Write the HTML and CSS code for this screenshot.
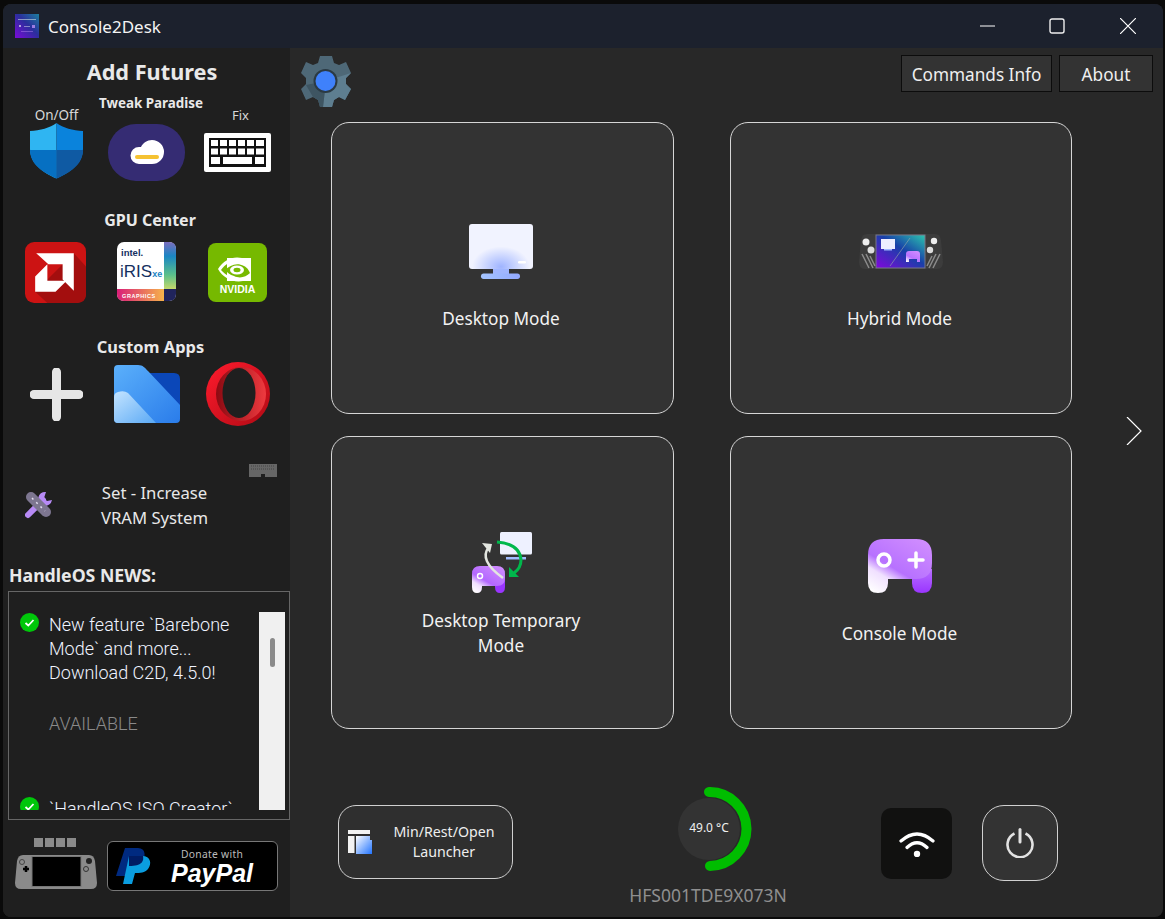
FILE: index.html
```html
<!DOCTYPE html>
<html lang="en">
<head>
<meta charset="utf-8">
<title>Console2Desk</title>
<link rel="stylesheet" href="styles.css">
</head>
<body>
<div class="window">
  <header class="titlebar">
    <svg class="app-icon" viewBox="0 0 24 24"><defs><linearGradient id="ai" x1="0" y1="1" x2="1" y2="0"><stop offset="0" stop-color="#7a0ad8"/><stop offset=".55" stop-color="#2a2f9c"/><stop offset="1" stop-color="#1d7f9e"/></linearGradient></defs><rect width="24" height="24" fill="url(#ai)"/><rect x="3" y="5" width="18" height="1" fill="#cdd" opacity=".6"/><rect x="4" y="11" width="2" height="2" fill="#dde" opacity=".7"/><rect x="9" y="12" width="6" height="1" fill="#dde" opacity=".5"/><rect x="17" y="11" width="3" height="3" fill="#c9f" opacity=".7"/><rect x="6" y="17" width="12" height="1" fill="#c9f" opacity=".4"/></svg>
    <span class="app-name">Console2Desk</span>
    <div class="win-controls">
      <svg class="win-btn" viewBox="0 0 16 16"><path d="M0 8h15" stroke="#fff" stroke-width="1" fill="none"/></svg>
      <svg class="win-btn" viewBox="0 0 16 16"><rect x="1" y="1" width="14" height="14" rx="2" stroke="#eee" stroke-width="1.4" fill="none"/></svg>
      <svg class="win-btn win-close" viewBox="0 0 16 16"><path d="M0 0L16 16M16 0L0 16" stroke="#fff" stroke-width="1.2" fill="none"/></svg>
    </div>
  </header>
  <div class="body-row">
    <aside class="sidebar">
      <h1 class="add-title">Add Futures</h1>
      <h2 class="tweak-title">Tweak Paradise</h2>
      <div class="tweak-row">
        <div class="tweak-col shield-col">
          <span class="mini-label">On/Off</span>
          <svg class="shield" viewBox="0 0 53 56"><path d="M26.5 0C20 5 10 7.500 0 8V26C0 41 14 50 26.500 55.500V0Z" fill="#2fb5f2"/><path d="M26.500 0C33 5 43 7.500 53 8V26C53 41 39 50 26.500 55.500V0Z" fill="#0a83dc"/><path d="M0 27H26.500V55.500C14 50 0 42 0 27Z" fill="#0670c2"/><path d="M53 27H26.500V55.500C39 50 53 42 53 27Z" fill="#0f5aa3"/></svg>
        </div>
        <svg class="cloud" viewBox="0 0 77 57"><rect width="77" height="57" rx="28" fill="#352c73"/><path d="M31 40A8.500 8.500 0 0 1 31 23H33C35 19 39 16 44 16A12 12 0 0 1 44 40Z" fill="#fff"/><rect x="27" y="31" width="24" height="4" rx="2" fill="#f5c232"/></svg>
        <div class="tweak-col fix-col">
          <span class="mini-label">Fix</span>
          <svg class="keyboard" viewBox="0 0 67 39"><rect width="67" height="39" rx="2" fill="#fff"/><rect x="5" y="5" width="57" height="29" fill="#111"/><g fill="#fff"><rect x="7" y="7" width="7" height="6"/><rect x="16" y="7" width="7" height="6"/><rect x="25" y="7" width="7" height="6"/><rect x="34" y="7" width="7" height="6"/><rect x="43" y="7" width="7" height="6"/><rect x="52" y="7" width="8" height="6"/><rect x="7" y="15.500" width="7" height="6"/><rect x="16" y="15.500" width="7" height="6"/><rect x="25" y="15.500" width="7" height="6"/><rect x="34" y="15.500" width="7" height="6"/><rect x="43" y="15.500" width="7" height="6"/><rect x="52" y="15.500" width="8" height="6"/><rect x="7" y="24" width="9" height="7"/><rect x="19" y="24" width="29" height="7"/><rect x="51" y="24" width="9" height="7"/></g></svg>
        </div>
      </div>
      <h2 class="section-title gpu-title">GPU Center</h2>
      <div class="gpu-row">
        <svg class="gpu-amd" viewBox="0 0 60 60"><rect width="60" height="60" rx="9" fill="#cc1313"/><path d="M48 11L60 24V51Q60 60 51 60H22L10 49Z" fill="#a30e0e"/><path d="M11 11H48V48L37 37V22H23Z" fill="#fff"/><path d="M22 22L10 34V49H30L41 38H22Z" fill="#fff"/></svg>
        <svg class="gpu-intel" viewBox="0 0 59 59"><defs><linearGradient id="ib" x1="0" y1="0" x2="0" y2="1"><stop offset="0" stop-color="#7b6dbd"/><stop offset=".3" stop-color="#1a86c4"/><stop offset=".7" stop-color="#5bc08a"/><stop offset="1" stop-color="#c4d86a"/></linearGradient><linearGradient id="ig" x1="0" y1="0" x2="1" y2="0"><stop offset="0" stop-color="#d91e78"/><stop offset="1" stop-color="#f6b34a"/></linearGradient></defs><rect width="59" height="59" rx="7" fill="#fff"/><path d="M47 0H52Q59 0 59 7V47H47Z" fill="url(#ib)"/><path d="M0 47H47V59H7Q0 59 0 52Z" fill="url(#ig)"/><path d="M47 47H59V52Q59 59 52 59H47Z" fill="#20245c"/><text x="4" y="14" class="t-intel">intel.</text><text x="3" y="35" class="t-iris">iRIS<tspan class="t-xe">xe</tspan></text><text x="5" y="56" class="t-graphics">GRAPHICS</text></svg>
        <svg class="gpu-nvidia" viewBox="0 0 59 59"><rect width="59" height="59" rx="8" fill="#76b900"/><path d="M19 15H43V38H19Z" fill="#fff"/><path d="M13 27C18 20 26 16 34 18L34 15C24 13 16 17 10 26C15 35 25 40 35 38V35C26 36 18 33 13 27Z" fill="#fff"/><path d="M17 27C22 22 29 19 36 23C40 25 41 28 42 30C38 34 32 36 26 33C22 32 19 29 17 27Z" fill="#76b900"/><ellipse cx="29" cy="27" rx="7" ry="4.500" fill="#fff"/><ellipse cx="29" cy="27" rx="3.500" ry="2.200" fill="#76b900"/><text x="29.500" y="50" class="t-nvidia">NVIDIA</text></svg>
      </div>
      <h2 class="section-title apps-title">Custom Apps</h2>
      <div class="apps-row">
        <svg class="app-plus" viewBox="0 0 53 53"><path d="M26.500 4V49M4 26.500H49" stroke="#e6e6e6" stroke-width="9" stroke-linecap="round" fill="none"/></svg>
        <svg class="app-folder" viewBox="0 0 66 58"><defs><linearGradient id="fa" x1="0" y1="0" x2="1" y2="1"><stop offset="0" stop-color="#5bb0fb"/><stop offset="1" stop-color="#2a7cea"/></linearGradient><linearGradient id="fb" x1="0" y1="0" x2="1" y2="1"><stop offset="0" stop-color="#c4e4ff"/><stop offset="1" stop-color="#5aa9f5"/></linearGradient></defs><path d="M28 8H60Q66 8 66 14V42Z" fill="#0b47b8"/><path d="M4 0H24C29 0 31 3 34 6L66 40V54Q66 58 62 58H4Q0 58 0 54V4Q0 0 4 0Z" fill="url(#fa)"/><path d="M0 32Q0 28 4 27Q10 25 14 28L42 58H4Q0 58 0 54Z" fill="url(#fb)"/></svg>
        <svg class="app-opera" viewBox="0 0 64 64"><defs><linearGradient id="oa" x1="0" y1="0" x2="1" y2="1"><stop offset="0" stop-color="#ff1b2d"/><stop offset="1" stop-color="#b00a14"/></linearGradient><linearGradient id="ob" x1="0" y1="0" x2="1" y2="0"><stop offset="0" stop-color="#8c0a12"/><stop offset="1" stop-color="#ee3a3f"/></linearGradient></defs><circle cx="32" cy="32" r="32" fill="url(#oa)"/><ellipse cx="35" cy="32" rx="25" ry="27" fill="url(#ob)"/><ellipse cx="33" cy="31" rx="16.500" ry="25" fill="#1f1f1f"/></svg>
      </div>
      <svg class="ram-icon" viewBox="0 0 28 13"><path d="M0 0H28V13H16V10H12V13H0Z" fill="#666"/><path d="M2 2H26M2 5H26" stroke="#444" stroke-width="1" stroke-dasharray="1 1"/></svg>
      <div class="vram-row">
        <svg class="wrench" viewBox="0 0 28 28"><path d="M3 24L18 9" stroke="#b78af5" stroke-width="6" stroke-linecap="round"/><path d="M21 1A7 7 0 1 0 27 9L22 10L19 7Z" fill="#b78af5"/><path d="M6 6L21 21" stroke="#7d7690" stroke-width="10" stroke-linecap="round"/><path d="M7 7L20 20" stroke="#e5e0f2" stroke-width="1.500" stroke-dasharray="2 4"/></svg>
        <span class="vram-label">Set - Increase<br>VRAM System</span>
      </div>
      <h2 class="news-title">HandleOS NEWS:</h2>
      <div class="news-box">
        <div class="news-view">
          <div class="news-list">
            <div class="news-item">
              <svg class="check" viewBox="0 0 19 19"><circle cx="9.500" cy="9.500" r="9.500" fill="#00c70a"/><path d="M5.500 10L8.300 12.500L13.500 7" stroke="#fff" stroke-width="1.800" fill="none"/></svg>
              <div class="news-text">New feature `Barebone Mode` and more...<br>Download C2D, 4.5.0!<span class="news-status">AVAILABLE</span></div>
            </div>
            <div class="news-item">
              <svg class="check" viewBox="0 0 19 19"><circle cx="9.500" cy="9.500" r="9.500" fill="#00c70a"/><path d="M5.500 10L8.300 12.500L13.500 7" stroke="#fff" stroke-width="1.800" fill="none"/></svg>
              <div class="news-text">`HandleOS ISO Creator`</div>
            </div>
          </div>
          <div class="scrollbar"><div class="thumb"></div></div>
        </div>
      </div>
      <div class="foot-row">
        <div class="handheld">
          <div class="dots"><i></i><i></i><i></i><i></i></div>
          <svg class="handheld-svg" viewBox="0 0 82 34"><path d="M8 0H74Q79 0 80 6L82 28Q82 34 76 34H6Q0 34 0 28L2 6Q3 0 8 0Z" fill="#8a8a8a"/><rect x="17" y="1.500" width="49" height="30" fill="#000" stroke="#777"/><path d="M8 14H14M11 11V17" stroke="#000" stroke-width="2.500"/><circle cx="7" cy="7" r="2.500" fill="none" stroke="#444"/><circle cx="74" cy="6" r="3" fill="#222"/><circle cx="71" cy="14" r="2.500" fill="none" stroke="#333"/></svg>
        </div>
        <div class="paypal">
          <svg class="pp-mark" viewBox="0 0 36 36"><path d="M9 0H22C30 0 30 9 26 14C23 18 18 18 13 18L10 28H0Z" fill="#002a80"/><path d="M13 8H26C35 8 36 16 32 21C29 25 24 25 19 25L16 36H7Z" fill="#0a9de0"/><path d="M13 8H27C28 13 26 18 13 18Z" fill="#001c64"/></svg>
          <div class="pp-text"><span class="pp-donate">Donate with</span><span class="pp-name">PayPal</span></div>
        </div>
      </div>
    </aside>
    <main class="main">
      <div class="top-row">
        <svg class="gear" viewBox="0 0 50 52"><path d="M19 1H31L33 8L38 10L45 7L50 18L45 23V29L50 34L44 45L38 42L33 45L31 52H19L17 45L12 42L5 45L0 34L5 29V23L0 18L5 7L12 10L17 8Z" fill="#4e6877"/><path d="M25 26L50 18L45 23V29L50 34L44 45L38 42L33 45L31 52H22Z" fill="#5e7e90"/><path d="M25 26L22 52H19L17 45L12 42L5 30Z" fill="#3e5562"/><circle cx="24.500" cy="26" r="12" fill="#2b3a44"/><circle cx="24.500" cy="26" r="10" fill="#3f81fb"/></svg>
        <div class="top-btns">
          <button class="top-btn cmd">Commands Info</button>
          <button class="top-btn about">About</button>
        </div>
      </div>
      <div class="mid-row">
        <div class="cards">
          <div class="card">
            <svg class="ico-desktop" viewBox="0 0 64 56"><defs><radialGradient id="dg" cx=".5" cy=".95" r=".45"><stop offset="0" stop-color="#9fb4ff"/><stop offset="1" stop-color="#f1f3ff"/></radialGradient><linearGradient id="ds" x1="0" y1="0" x2="1" y2="0"><stop offset="0" stop-color="#a4c4ff"/><stop offset="1" stop-color="#93a9ff"/></linearGradient></defs><rect x="0" y="0" width="64" height="45" rx="3" fill="url(#dg)"/><rect x="24" y="45" width="16" height="5" fill="#a0b6ff"/><rect x="12" y="49.500" width="39" height="5.500" rx="2.700" fill="url(#ds)"/><rect x="49" y="37" width="8" height="2.500" rx="1.200" fill="#fff"/></svg>
            <span class="card-label">Desktop Mode</span>
          </div>
          <div class="card">
            <svg class="ico-hybrid" viewBox="0 0 84 36"><defs><linearGradient id="hg" x1="0" y1="1" x2="1" y2="0"><stop offset="0" stop-color="#8106dd"/><stop offset=".55" stop-color="#1840a8"/><stop offset="1" stop-color="#2cc6ae"/></linearGradient><linearGradient id="hp" x1=".8" y1="0" x2=".1" y2="1"><stop offset="0" stop-color="#cf8cff"/><stop offset=".6" stop-color="#b771ff"/><stop offset="1" stop-color="#fff"/></linearGradient></defs><path d="M8 0H76Q81 0 82 6L84 28Q84 35 78 35H6Q0 35 0 28L2 6Q3 0 8 0Z" fill="#3c3c3c"/><path d="M3 20L10 34M7 20L14 34M11 22L16 32M81 20L74 34M77 20L70 34M73 22L68 32" stroke="#8a8a8a" stroke-width="1.500"/><rect x="17" y="1" width="49" height="33" fill="url(#hg)" stroke="#778"/><circle cx="7" cy="8" r="3.500" fill="#eee"/><circle cx="12" cy="16" r="3.500" fill="#ddd"/><circle cx="75" cy="7" r="3.200" fill="#eee"/><circle cx="71" cy="16" r="3.200" fill="#ddd"/><rect x="22" y="5" width="14" height="10" fill="#eef"/><rect x="25" y="15" width="8" height="1.500" fill="#a0b6ff"/><path d="M51 4L31 32" stroke="#9aa" stroke-width=".6"/><path d="M47 20Q47 17 50 17H58Q61 17 61 20V28H58V25H50V28H47Z" fill="url(#hp)"/></svg>
            <span class="card-label">Hybrid Mode</span>
          </div>
          <div class="card">
            <svg class="ico-temp" viewBox="0 0 62 62"><defs><linearGradient id="pa" x1=".8" y1="0" x2=".1" y2="1"><stop offset="0" stop-color="#cf8bff"/><stop offset=".55" stop-color="#b367ff"/><stop offset=".75" stop-color="#f0e0ff"/><stop offset="1" stop-color="#fff"/></linearGradient></defs><rect x="28" y="0" width="32" height="22.500" rx="1.500" fill="#eef1ff"/><rect x="34" y="25" width="20" height="2.500" fill="#a0bcff"/><path d="M23 42H33V55Q33 61 28 61Q23 61 23 55Z" fill="#9a35ff"/><path d="M0 42Q0 34 8 34H25Q33 34 33 42V46Q33 54 25 54H10V55Q10 61 5 61Q0 61 0 55Z" fill="url(#pa)"/><circle cx="8" cy="44" r="2.500" fill="none" stroke="#fff" stroke-width="1.500"/><path d="M17 15Q6 28 31 46" stroke="#e3e6e0" stroke-width="2.500" fill="none"/><path d="M10 11L20 12L18 21Z" fill="#e3e6e0"/><path d="M25 10Q48 12 49 28Q49 36 42 41" stroke="#00b84c" stroke-width="3" fill="none"/><path d="M37 35V45H47Z" fill="#00b84c"/></svg>
            <span class="card-label two">Desktop Temporary<br>Mode</span>
          </div>
          <div class="card">
            <svg class="ico-console" viewBox="0 0 64 54"><defs><linearGradient id="ca" x1=".8" y1="0" x2=".1" y2="1"><stop offset="0" stop-color="#cf8cff"/><stop offset=".55" stop-color="#b771ff"/><stop offset=".72" stop-color="#f0e0ff"/><stop offset="1" stop-color="#fff"/></linearGradient><linearGradient id="cb" x1="0" y1="0" x2="0" y2="1"><stop offset="0" stop-color="#b76fff"/><stop offset="1" stop-color="#9a35ff"/></linearGradient></defs><path d="M44 30H64V44Q64 54 54 54Q44 54 44 44Z" fill="url(#cb)"/><path d="M0 16Q0 0 16 0H48Q64 0 64 16V24Q64 40 48 40H20V44Q20 54 10 54Q0 54 0 44Z" fill="url(#ca)"/><circle cx="16" cy="21" r="6" fill="none" stroke="#fff" stroke-width="3.500"/><path d="M41 21H55M48 14V28" stroke="#fff" stroke-width="3.500" stroke-linecap="round"/></svg>
            <span class="card-label">Console Mode</span>
          </div>
        </div>
        <svg class="chevron" viewBox="0 0 16 28"><path d="M1 0L15 14L1 28" stroke="#fff" stroke-width="1.200" fill="none"/></svg>
      </div>
      <div class="bottom-row">
        <div class="launcher">
          <svg class="launcher-ico" viewBox="0 0 24 24"><defs><linearGradient id="lg" x1="0" y1="0" x2="1" y2="1"><stop offset="0" stop-color="#fff"/><stop offset="1" stop-color="#2274ff"/></linearGradient></defs><rect x="0" y="0" width="22" height="4" fill="#f2f2f2"/><rect x="0" y="6" width="6.500" height="17" fill="#f2f2f2"/><path d="M8 6H22V10H24V24H8Z" fill="url(#lg)"/></svg>
          <span class="launcher-text">Min/Rest/Open<br>Launcher</span>
        </div>
        <div class="gauge-col">
          <div class="gauge">
            <svg class="gauge-svg" viewBox="0 0 84 84"><circle cx="37" cy="42" r="31" fill="#333"/><path d="M37 5A37 37 0 0 1 38 79" stroke="#00bd00" stroke-width="10" stroke-linecap="round" fill="none"/></svg>
            <span class="gauge-text">49.0 °C</span>
          </div>
          <span class="serial">HFS001TDE9X073N</span>
        </div>
        <div class="wifi">
          <svg class="wifi-svg" viewBox="0 0 36 26"><path d="M2 10Q18 -4 34 10M8 16.500Q18 7 28 16.500" stroke="#fff" stroke-width="3.200" stroke-linecap="round" fill="none"/><circle cx="18" cy="23" r="3.200" fill="#fff"/></svg>
        </div>
        <div class="power">
          <svg class="power-svg" viewBox="0 0 30 30"><path d="M9.500 5.500A12.500 12.500 0 1 0 20.500 5.500" stroke="#e2e2e2" stroke-width="2.600" fill="none"/><path d="M15 1.500V14" stroke="#e2e2e2" stroke-width="3" stroke-linecap="round"/></svg>
        </div>
      </div>
    </main>
  </div>
</div>
</body>
</html>
```

FILE: styles.css
```css
* { box-sizing: border-box; }
html, body { margin: 0; height: 100%; }
body {
  width: 1165px; height: 919px; overflow: hidden; background: #0a0a0a;
  padding: 4px 2px 2px 3px;
  font-family: "Noto Sans", "Open Sans", sans-serif; color: #f2f2f2;
}
svg { display: block; flex: none; }
.window {
  width: 1160px; height: 913px; border-radius: 8px; overflow: hidden;
  display: flex; flex-direction: column; background: #282828;
}
.titlebar {
  height: 44px; flex: none; background: #1c212d;
  display: flex; align-items: center; padding: 0 27px 0 12px;
}
.app-icon { width: 24px; height: 24px; }
.app-name { margin-left: 9px; font-size: 17px; color: #f4f4f4; }
.win-controls { margin-left: auto; display: flex; align-items: center; gap: 53px; }
.win-btn { width: 16px; height: 16px; }
.win-close { margin-left: 2px; }

.body-row { flex: 1; display: flex; min-height: 0; }
.sidebar {
  width: 287px; flex: none; background: #1f1f1f;
  display: flex; flex-direction: column; position: relative;
}
h1, h2 { margin: 0; font-weight: 700; text-align: center; color: #e9e9e9; }
.add-title { font-size: 21.700px; line-height: 28px; margin-top: 10px; padding-left: 11px; }
.tweak-title { font-size: 13.400px; line-height: 18px; margin-top: 8px; padding-left: 9px; }
.tweak-row { display: flex; height: 80px; margin-top: -6px; align-items: flex-start; position: relative; }
.tweak-col { display: flex; flex-direction: column; align-items: center; }
.shield-col { margin-left: 27px; width: 53px; }
.mini-label { font-size: 13.500px; line-height: 18px; color: #d8d8d8; }
.shield { width: 53px; height: 56px; margin-top: -1px; }
.cloud { width: 77px; height: 57px; margin: 18px 0 0 25px; }
.fix-col { margin-left: 19px; width: 67px; }
.keyboard { width: 67px; height: 39px; margin-top: 9px; }
.fix-col .mini-label { font-size: 13px; padding-left: 6px; }

.section-title { font-size: 16px; line-height: 22px; }
.gpu-title { margin-top: 23px; padding-left: 7px; }
.gpu-row { display: flex; margin-top: 11px; padding-left: 22px; align-items: flex-start; height: 60px; }
.gpu-amd { width: 61px; height: 61px; }
.gpu-intel { width: 59px; height: 59px; margin-left: 31px; }
.gpu-nvidia { width: 59px; height: 59px; margin-left: 32px; margin-top: 1px; }
.t-intel { font: 700 9.500px "Liberation Sans", sans-serif; fill: #16305f; }
.t-iris { font: 400 17px "Liberation Sans", sans-serif; fill: #16305f; }
.t-xe { font: 700 9px "Liberation Sans", sans-serif; fill: #1a86c4; }
.t-graphics { font: 700 5.500px "Liberation Sans", sans-serif; fill: #fff; letter-spacing: .6px; }
.t-nvidia { font: 700 10.500px "Liberation Sans", sans-serif; fill: #fff; text-anchor: middle; }

.apps-title { font-size: 16.400px; margin-top: 34px; padding-left: 8px; }
.apps-row { display: flex; align-items: flex-start; margin-top: 4px; padding-left: 27px; height: 64px; }
.app-plus { width: 53px; height: 53px; margin-top: 6px; }
.app-folder { width: 66px; height: 58px; margin: 3px 0 0 31px; }
.app-opera { width: 64px; height: 64px; margin-left: 26px; }

.ram-icon { width: 28px; height: 13px; margin: 38px 0 0 246px; }
.vram-row { display: flex; align-items: center; margin-top: 3px; padding-left: 22px; }
.wrench { width: 28px; height: 28px; }
.vram-label { width: 157px; margin-left: 23px; text-align: center; font-size: 16.700px; line-height: 25px; color: #e8e8e8; }
.news-title { text-align: left; font-size: 17.700px; line-height: 22px; margin: 34px 0 0 6px; }
.news-box {
  margin: 5px 0 0 5px; height: 229px; border: 1px solid #666; padding: 20px 4px 8px 11px;
}
.news-view { display: flex; height: 198px; overflow: hidden; }
.news-list { flex: 1; min-width: 0; overflow: hidden; }
.news-item { display: flex; gap: 10px; height: 184px; padding-right: 18px; }
.check { width: 19px; height: 19px; margin-top: 1px; }
.news-text { font-family: Roboto, sans-serif; font-weight: 300; font-size: 18px; line-height: 24px; color: #f0f4ff; margin-top: 1px; }
.news-status { display: block; margin-top: 27px; color: #8a8a8a; }
.scrollbar { width: 26px; flex: none; background: #f0f0f0; padding: 26px 0 0 11px; }
.thumb { width: 5px; height: 29px; border-radius: 3px; background: #8a8a8a; }
.foot-row { display: flex; align-items: flex-start; padding: 18px 0 0 12px; }
.handheld { width: 82px; }
.dots { display: flex; gap: 2px; margin-left: 19px; height: 9px; }
.dots i { width: 9px; height: 9px; background: #8a8a8a; }
.handheld-svg { width: 82px; height: 34px; margin-top: 8px; }
.paypal {
  width: 171px; height: 50px; margin: 3px 0 0 10px; background: #000; border: 1px solid #777; border-radius: 6px;
  display: flex; align-items: center; padding-left: 8px;
}
.pp-mark { width: 36px; height: 36px; }
.pp-text { display: flex; flex-direction: column; align-items: center; margin-left: 18px; width: 84px; }
.pp-donate { font-size: 10.300px; line-height: 13px; color: #bbb; letter-spacing: .3px; }
.pp-name { font: italic 700 25px/24px "Liberation Sans", sans-serif; color: #fff; }

.main { flex: 1; min-width: 0; display: flex; flex-direction: column; }
.top-row { display: flex; height: 74px; flex: none; padding: 7px 10px 0 11px; align-items: flex-start; justify-content: space-between; }
.gear { width: 50px; height: 52px; }
.top-btns { display: flex; gap: 7px; }
.top-btn {
  height: 37px; background: #333; border: 1px solid #0c0c0c; color: #efefef;
  font: 400 17.200px "Noto Sans", sans-serif; padding: 1px 0 0;
}
.cmd { width: 151px; }
.about { width: 94px; }
.mid-row { display: flex; align-items: flex-start; padding-left: 41px; height: 607px; flex: none; }
.cards { display: grid; grid-template-columns: 343px 342px; grid-template-rows: 292px 293px; gap: 22px 56px; }
.card {
  background: #333; border: 1px solid #d6d6d6; border-radius: 18px;
  display: flex; flex-direction: column; align-items: center; position: relative;
}
.card-label { position: absolute; left: 0; right: 3px; text-align: center; font-size: 17.200px; line-height: 25px; color: #f2f2f2; top: 183px; }
.card-label.two { top: 171px; }
.card:nth-child(4) .card-label { top: 184px; }
.ico-desktop { width: 64px; height: 56px; margin: 101px 3px 0 0; }
.ico-hybrid { width: 84px; height: 36px; margin-top: 111px; }
.ico-temp { width: 62px; height: 62px; margin-top: 95px; }
.ico-console { width: 64px; height: 54px; margin: 102px 2px 0 0; }
.chevron { width: 16px; height: 28px; margin: 295px 0 0 54px; }
.bottom-row { display: flex; align-items: flex-start; height: 100px; flex: none; padding: 2px 0 0 48px; margin-top: 72px; }
.launcher {
  width: 175px; height: 74px; margin-top: 2px; background: #2f2f2f; border: 1px solid #d0d0d0; border-radius: 18px;
  display: flex; align-items: center; padding-left: 9px;
}
.launcher-ico { width: 24px; height: 24px; }
.launcher-text { width: 118px; margin-left: 13px; text-align: center; font-size: 14.200px; line-height: 20px; color: #eee; }
.gauge-col { width: 160px; margin-left: 115px; display: flex; flex-direction: column; align-items: center; margin-top: -16px; }
.gauge { width: 84px; height: 84px; position: relative; margin-left: 12px; }
.gauge-svg { width: 84px; height: 84px; }
.gauge-text { position: absolute; left: 0; width: 74px; top: 33px; text-align: center; font-size: 12px; line-height: 16px; color: #f0f0f0; }
.serial { margin-top: 14px; font-size: 17.500px; line-height: 20px; color: #8f8f8f; white-space: nowrap; }
.wifi {
  width: 71px; height: 71px; margin: 5px 0 0 93px; background: #111110; border-radius: 10px;
  display: flex; align-items: center; justify-content: center;
}
.wifi-svg { width: 36px; height: 26px; }
.power {
  width: 76px; height: 76px; margin: 2px 0 0 30px; background: #333; border: 1px solid #d0d0d0; border-radius: 22px;
  display: flex; align-items: center; justify-content: center;
}
.power-svg { width: 30px; height: 30px; }
```
